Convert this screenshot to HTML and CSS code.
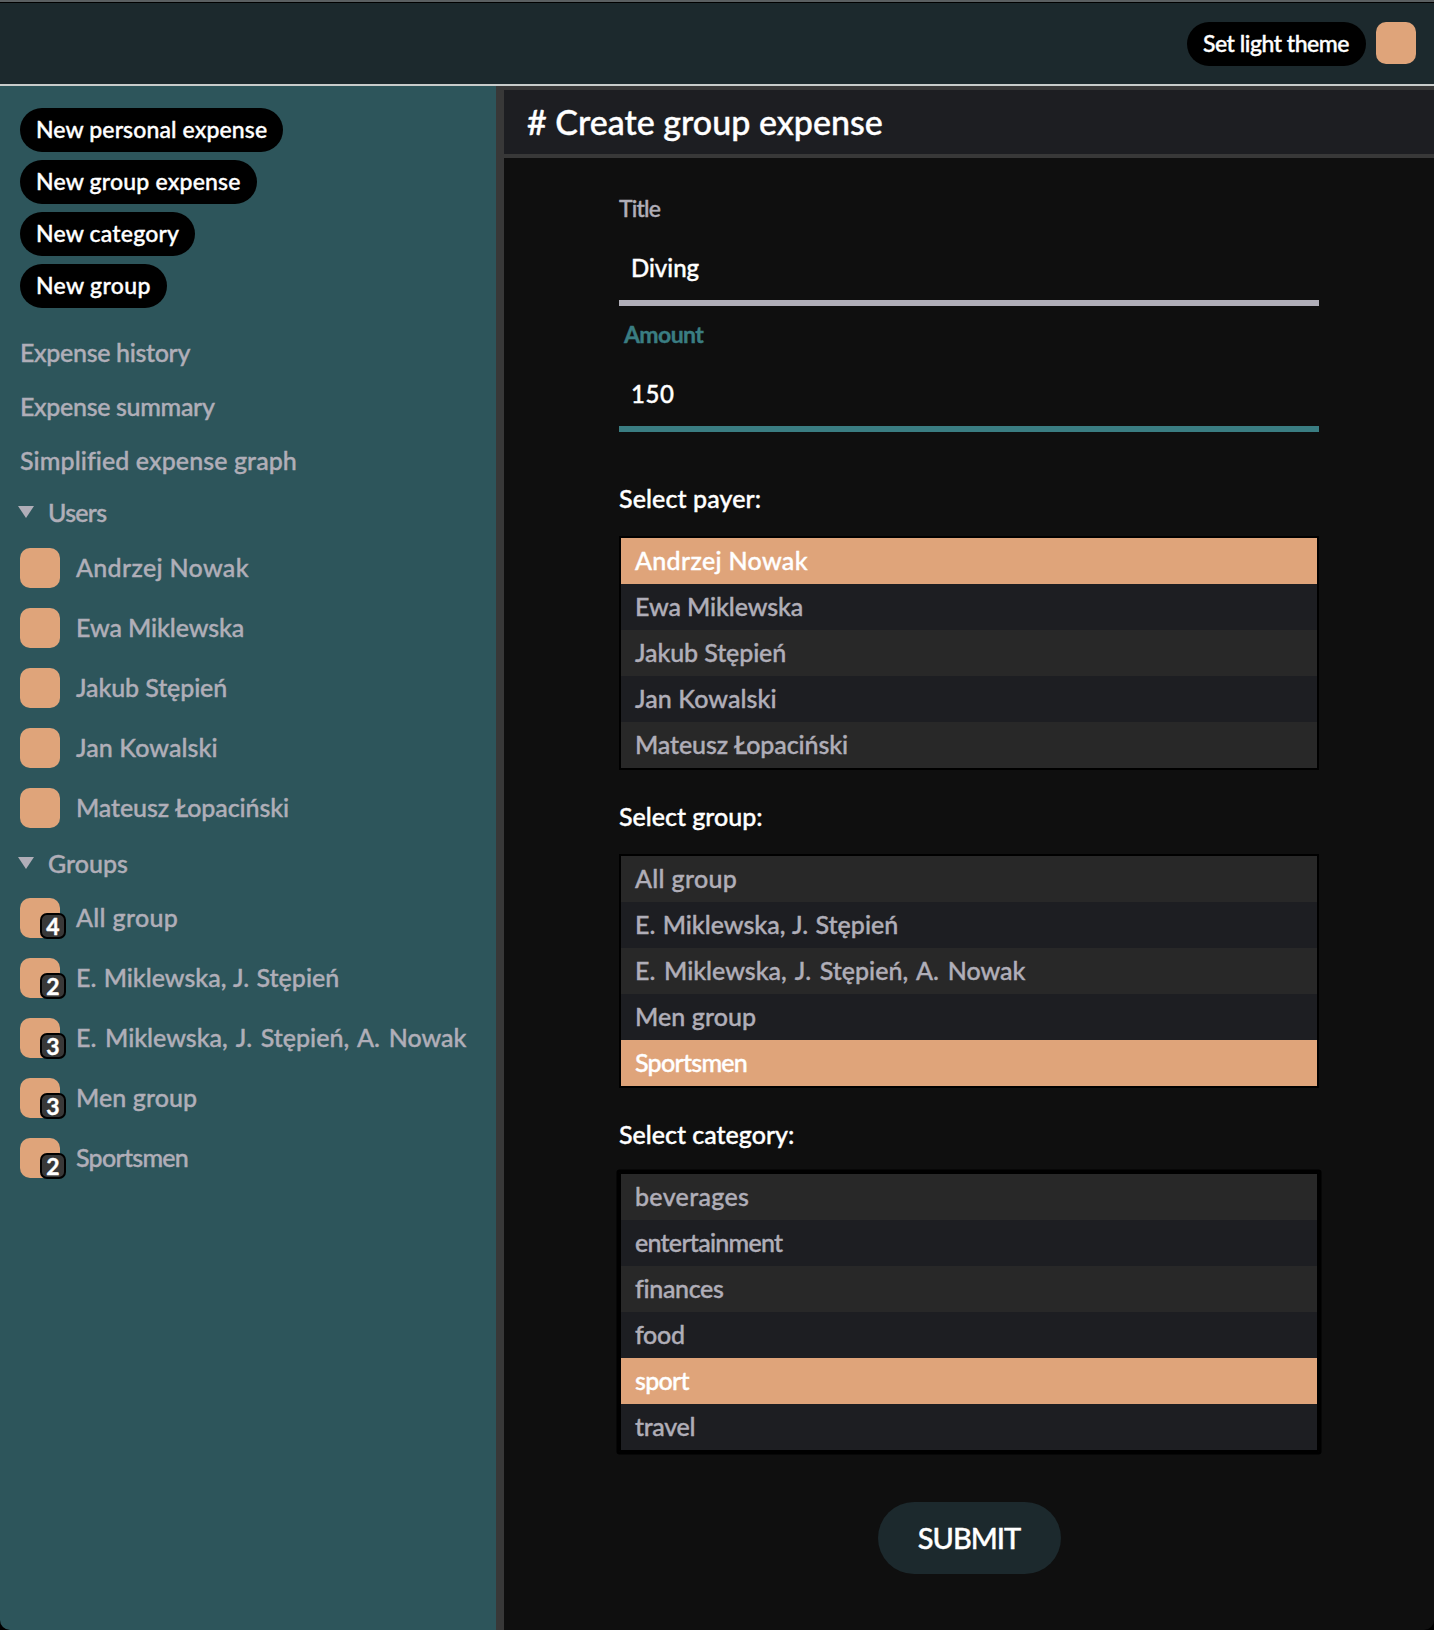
FILE: index.html
```html
<!DOCTYPE html>
<html lang="en">
<head>
<meta charset="utf-8">
<title>Create group expense</title>
<link rel="stylesheet" href="styles.css">
</head>
<body>
<div class="app">
  <header class="topbar">
    <button class="pill pill-theme">Set light theme</button>
    <span class="avatar avatar-top"></span>
  </header>
  <div class="layout">
    <aside class="sidebar">
      <div class="actions">
        <button class="pill pill-personal">New personal expense</button>
        <button class="pill">New group expense</button>
        <button class="pill">New category</button>
        <button class="pill pill-group">New group</button>
      </div>
      <nav class="links">
        <a class="link tight-2">Expense history</a>
        <a class="link tight-2">Expense summary</a>
        <a class="link loose-1">Simplified expense graph</a>
      </nav>
      <div class="summary summary-users"><span class="marker"></span><span class="tight-3">Users</span></div>
      <div class="entry"><span class="avatar"></span><span class="loose-2">Andrzej Nowak</span></div>
      <div class="entry"><span class="avatar"></span><span class="tight-1">Ewa Miklewska</span></div>
      <div class="entry"><span class="avatar"></span><span class="tight-1">Jakub Stępień</span></div>
      <div class="entry"><span class="avatar"></span><span class="loose-1">Jan Kowalski</span></div>
      <div class="entry"><span class="avatar"></span><span class="tight-1">Mateusz Łopaciński</span></div>
      <div class="summary"><span class="marker"></span><span>Groups</span></div>
      <div class="entry"><span class="avatar"><b class="badge">4</b></span><span class="loose-2">All group</span></div>
      <div class="entry"><span class="avatar"><b class="badge">2</b></span><span class="pair">E. Miklewska, J. Stępień</span></div>
      <div class="entry"><span class="avatar"><b class="badge">3</b></span><span class="trio">E. Miklewska, J. Stępień, A. Nowak</span></div>
      <div class="entry"><span class="avatar"><b class="badge">3</b></span><span class="loose-1">Men group</span></div>
      <div class="entry"><span class="avatar"><b class="badge">2</b></span><span class="tight-3">Sportsmen</span></div>
    </aside>
    <main class="content">
      <h1 class="heading"># Create group expense</h1>
      <form class="form">
        <div class="field">
          <label class="label">Title</label>
          <div class="value">Diving</div>
        </div>
        <div class="field field-active">
          <label class="label">Amount</label>
          <div class="value">150</div>
        </div>
        <div class="caption caption-first">Select payer:</div>
        <div class="list">
          <div class="option selected loose-2">Andrzej Nowak</div>
          <div class="option tight-1">Ewa Miklewska</div>
          <div class="option tight-1">Jakub Stępień</div>
          <div class="option loose-1">Jan Kowalski</div>
          <div class="option tight-1">Mateusz Łopaciński</div>
        </div>
        <div class="caption">Select group:</div>
        <div class="list">
          <div class="option loose-2">All group</div>
          <div class="option pair">E. Miklewska, J. Stępień</div>
          <div class="option trio">E. Miklewska, J. Stępień, A. Nowak</div>
          <div class="option loose-1">Men group</div>
          <div class="option selected tight-3">Sportsmen</div>
        </div>
        <div class="caption">Select category:</div>
        <div class="list list-focus">
          <div class="option loose-2">beverages</div>
          <div class="option tight-3">entertainment</div>
          <div class="option tight-2">finances</div>
          <div class="option tight-2">food</div>
          <div class="option selected tight-3">sport</div>
          <div class="option tight-2">travel</div>
        </div>
        <button class="submit" type="button">SUBMIT</button>
      </form>
    </main>
  </div>
</div>
</body>
</html>
```
FILE: styles.css
```css
* { box-sizing: border-box; }

body {
  margin: 0;
  background: #000;
  color: #fff;
  font-family: Lato, "Open Sans", sans-serif;
  font-size: 25px;
  font-weight: 500;
  -webkit-text-stroke: 0.4px currentColor;
}

button { border: 0; color: #fff; font-family: inherit; font-weight: 500; }

.app {
  height: 1630px;
  border-radius: 0 0 10px 10px;
  overflow: hidden;
  display: flex;
  flex-direction: column;
  border-top: 2px solid #5a5f61;
}

.topbar {
  flex: none;
  height: 84px;
  padding: 19px 18px 0 0;
  background: #1c292d;
  border-top: 1px solid #000;
  border-bottom: 2px solid #c8cccb;
  display: flex;
  justify-content: flex-end;
  align-items: flex-start;
  gap: 10px;
}

.pill {
  height: 44px;
  padding: 0 16px 1px;
  border-radius: 22px;
  background: #000;
  font-size: 23px;
  line-height: 43px;
  letter-spacing: 0.2px;
  white-space: nowrap;
}
.pill-theme { letter-spacing: -0.48px; padding-right: 17px; }
.pill-personal { letter-spacing: 0.12px; }
.pill-group { letter-spacing: 0.33px; }

.avatar {
  flex: none;
  position: relative;
  width: 40px;
  height: 40px;
  border-radius: 10px;
  background: #dfa47a;
}
.avatar-top { height: 42px; }

.badge {
  position: absolute;
  left: 20px;
  top: 15px;
  width: 26px;
  height: 26px;
  border: 2px solid #000;
  border-radius: 7px;
  background: #383838;
  color: #fff;
  font-size: 23px;
  line-height: 22px;
  text-align: center;
}

.layout { flex: 1; display: flex; min-height: 0; }

.sidebar {
  flex: none;
  width: 504px;
  padding: 22px 0 0 20px;
  background: #2d555b;
  border-right: 8px solid #383838;
  color: #b0aeb8;
}

.actions { display: flex; flex-direction: column; align-items: flex-start; gap: 8px; }
.links { margin-top: 17px; }
.link { display: block; height: 54px; line-height: 54px; }

.summary { display: flex; align-items: center; height: 50px; line-height: 50px; }
.summary-users { height: 51px; padding-bottom: 1px; }
.marker {
  width: 16px;
  height: 12px;
  margin: 0 14px 0 -2px;
  background: #b0aeb8;
  clip-path: polygon(0 0, 100% 0, 50% 100%);
}

.entry { display: flex; align-items: flex-start; gap: 16px; height: 60px; line-height: 58px; white-space: nowrap; }
.entry .avatar { margin-top: 10px; }

.content { flex: 1; background: #0f0f0f; }

.heading {
  height: 72px;
  margin: 0;
  padding-left: 23px;
  border-top: 4px solid #383838;
  border-bottom: 4px solid #383838;
  background: #1d1e22;
  font-size: 34px;
  font-weight: 500;
  line-height: 64px;
}

.form { display: flex; flex-direction: column; width: 700px; margin: 35px auto 0; }

.field { margin-bottom: 13px; border-bottom: 6px solid #b0aeb8; }
.label { display: block; height: 30px; line-height: 30px; font-size: 23px; letter-spacing: -0.8px; color: #b0aeb8; }
.value { height: 77px; padding: 13px 0 0 12px; font-size: 24px; line-height: 64px; }

.field-active { border-color: #3a7d82; }
.field-active .label { padding-left: 5px; color: #3a7d82; font-weight: 700; letter-spacing: -0.6px; }
.field-active .value { letter-spacing: 0.6px; }

.caption { height: 53px; margin-top: 31px; line-height: 30px; }
.caption-first { margin-top: 38px; letter-spacing: 0.1px; }

.list { border: 2px solid #000; color: #b0aeb8; }
.list-focus { border-radius: 1px; box-shadow: 0 0 0 2.5px #000; }
.option { height: 46px; padding-left: 14px; line-height: 44px; background: #1d1e22; }
.option:nth-child(odd) { background: #282828; }
.list .option.selected { background: #dfa47a; color: #fff; }

.submit {
  align-self: center;
  width: 183px;
  height: 72px;
  margin-top: 50px;
  padding: 0 0 2px;
  border-radius: 36px;
  background: #1c292d;
  font-size: 29px;
  letter-spacing: -1px;
}

/* Tracking steps for names and options */
.tight-1 { letter-spacing: -0.1px; }
.tight-2 { letter-spacing: -0.33px; }
.tight-3 { letter-spacing: -0.72px; }
.loose-1 { letter-spacing: 0.09px; }
.loose-2 { letter-spacing: 0.32px; }
.pair { word-spacing: 1px; }
.trio { word-spacing: 2.4px; }
```
